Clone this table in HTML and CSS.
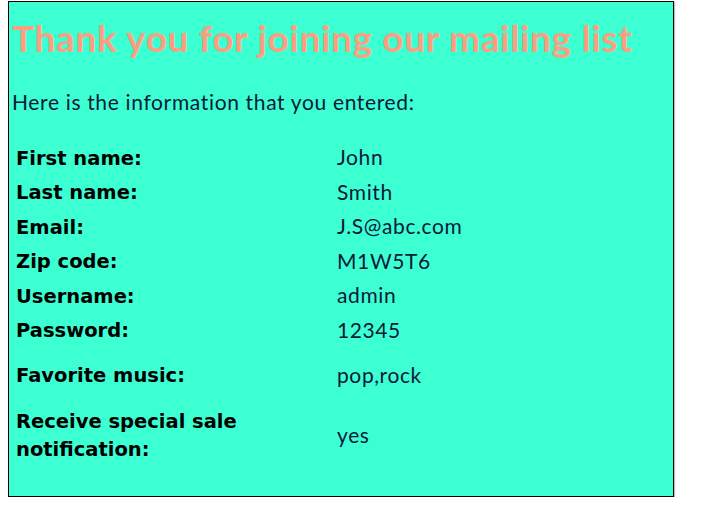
FILE: index.html
```html
<!DOCTYPE html>
<html>
<head>
<meta charset="utf-8">
<link rel="stylesheet" href="styles.css">
</head>
<body>
<div class="box">
  <h1 class="title">Thank you for joining our mailing list</h1>
  <p class="intro">Here is the information that you entered:</p>
  <table class="info">
    <tr><th>First name:</th><td>John</td></tr>
    <tr><th>Last name:</th><td>Smith</td></tr>
    <tr><th>Email:</th><td>J.S@abc.com</td></tr>
    <tr><th>Zip code:</th><td>M1W5T6</td></tr>
    <tr><th>Username:</th><td>admin</td></tr>
    <tr><th>Password:</th><td>12345</td></tr>
    <tr class="music"><th>Favorite music:</th><td>pop,rock</td></tr>
    <tr class="notify"><th>Receive special sale<br>notification:</th><td>yes</td></tr>
  </table>
</div>
</body>
</html>
```
FILE: styles.css
```css
html, body {
  margin: 0;
  padding: 0;
  background: #ffffff;
}
body {
  padding: 1px 0 0 8px;
  font-family: "Lato", "Open Sans", sans-serif;
  color: #0b1a3a;
}
.box {
  width: 658px;
  height: 494px;
  border: 1px solid #000;
  background: #3cffd2;
  padding: 0 3px;
  box-shadow: 1px 1px 1px rgba(0,0,0,0.25);
}
.title {
  margin: 14px 0 0 0;
  font-size: 37px;
  letter-spacing: 0.65px;
  font-weight: 700;
  color: #fd9e80;
  line-height: 44px;
}
.intro {
  margin: 30px 0 0 0;
  font-size: 21px;
  letter-spacing: 0.65px;
  line-height: 24px;
}
.info {
  margin-top: 26px;
  border-collapse: separate;
  border-spacing: 4px 0;
}
.info th {
  text-align: left;
  font-family: "DejaVu Sans", sans-serif;
  font-weight: 700;
  font-size: 19.5px;
  line-height: 24px;
  width: 317px;
  height: 31.5px;
  padding: 3px 0 0 0;
  vertical-align: middle;
  color: #000;
}
.info td {
  font-size: 21px;
  letter-spacing: 0.6px;
  line-height: 24px;
  padding: 0;
}
.info tr.music th {
  height: 52.5px;
}
.info tr.notify th {
  height: 61.5px;
  line-height: 28px;
}
```
